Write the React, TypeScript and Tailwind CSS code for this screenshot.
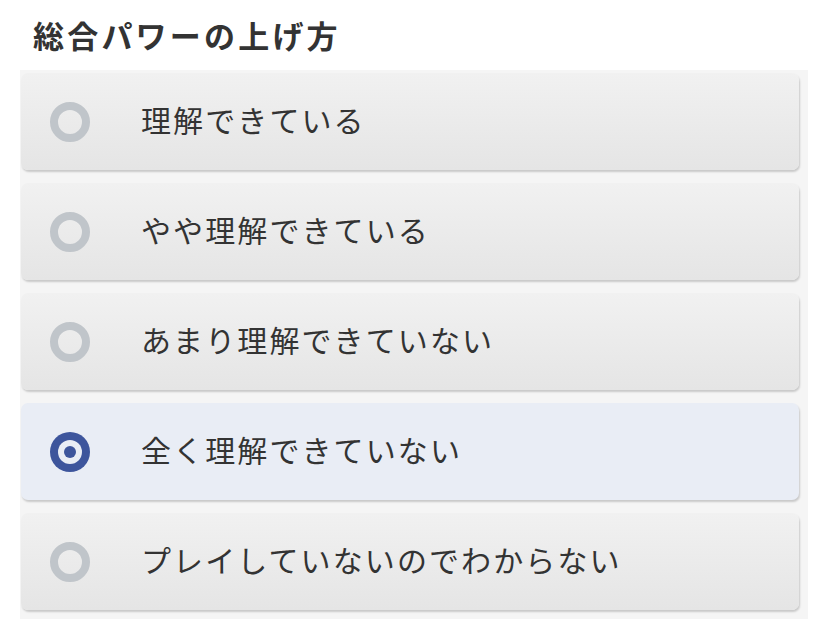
import React, { useState } from "react";

const options = [
  "理解できている",
  "やや理解できている",
  "あまり理解できていない",
  "全く理解できていない",
  "プレイしていないのでわからない",
];

function Radio({ checked }: { checked: boolean }) {
  if (checked) {
    return (
      <span className="flex h-10 w-10 shrink-0 items-center justify-center rounded-full bg-[#3d559c]">
        <span className="flex h-6 w-6 items-center justify-center rounded-full bg-[#e9edf5]">
          <span className="h-3 w-3 rounded-full bg-[#3d559c]" />
        </span>
      </span>
    );
  }
  return <span className="h-10 w-10 shrink-0 rounded-full border-[8px] border-[#c0c5ca]" />;
}

export default function App() {
  const [selected, setSelected] = useState(3);

  return (
    <div className="h-[635px] w-[828px] bg-white font-['Noto_Sans_CJK_JP','Noto_Sans',sans-serif] text-[#333]">
      <h2 className="pl-[33px] pt-[12px] text-[31px] font-bold leading-[46px] tracking-[3.2px] text-[#333]">
        総合パワーの上げ方
      </h2>
      <div className="ml-5 mt-[12px] flex w-[788px] flex-col gap-[13px] bg-[#f5f5f5] pb-[9px] pl-px pr-[9px] pt-[3px]">
        {options.map((label, i) => (
          <button
            key={label}
            onClick={() => setSelected(i)}
            className={
              i === selected
                ? "flex h-[97px] items-center rounded-[7px] bg-[#e9edf5] pl-[29px] text-left shadow-[1px_2px_2px_rgba(0,0,0,0.18)]"
                : "flex h-[97px] items-center rounded-[7px] bg-gradient-to-b from-[#f1f1f1] to-[#e5e5e5] pl-[29px] text-left shadow-[1px_2px_2px_rgba(0,0,0,0.18)]"
            }
          >
            <Radio checked={i === selected} />
            <span className="ml-[51px] pb-[6px] text-[30px] leading-none tracking-[2.1px] text-[#333]">{label}</span>
          </button>
        ))}
      </div>
    </div>
  );
}
